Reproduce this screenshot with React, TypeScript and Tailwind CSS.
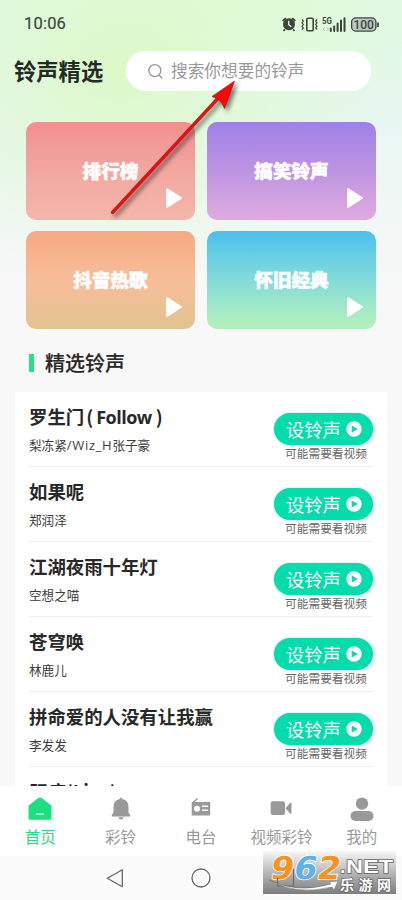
import type { ReactNode } from "react"
import clsx from "clsx"

interface Song {
    title: ReactNode;
    artist: ReactNode;
}

const categories = [
    { name: "排行榜", bg: "bg-linear-to-b from-[#f18f8f] via-[#f2a7a0] to-[#f4b7a9]" },
    { name: "搞笑铃声", bg: "bg-linear-to-b from-[#9f80e8] via-[#bd94e2] to-[#dfabdf]" },
    { name: "抖音热歌", bg: "bg-linear-to-b from-[#f6aa80] via-[#f8bd9a] to-[#e2c38f]" },
    { name: "怀旧经典", bg: "bg-linear-to-b from-[#4bbfec] via-[#82dcd8] to-[#b7f1b9]" },
]

const songs: Song[] = [
    {
        title: <>罗生门<span className="ml-[2px] font-semibold">(</span><span className="ml-[3px] font-['Open_Sans'] text-[18px] tracking-[-0.5px]">Follow</span><span className="ml-[4px] font-semibold">)</span></>,
        artist: <>梨冻紧<span className="font-['Open_Sans'] text-[13px] tracking-[0.7px]">/Wiz_H</span>张子豪</>,
    },
    { title: "如果呢", artist: "郑润泽" },
    { title: "江湖夜雨十年灯", artist: "空想之喵" },
    { title: "苍穹唤", artist: "林鹿儿" },
    { title: "拼命爱的人没有让我赢", artist: "李发发" },
]

function StatusBar(){
    return(
        <div className="h-[47px] flex items-center justify-between pl-[24px] pr-[22px] text-[#3c463f]">
            <span className="pt-[2px] font-['Roboto'] text-[16.5px] tracking-[0.2px] leading-none [-webkit-text-stroke:0.2px_#3c463f]">10:06</span>
            <svg width="100" height="20" viewBox="280 13 100 20" fill="none">
                {/* alarm */}
                <circle cx="289" cy="23.3" r="6" fill="currentColor" />
                <path d="M282.7 20l3.2-2.9M295.3 20l-3.2-2.9M285 28.3l-1.5 1.6M293 28.3l1.5 1.6" stroke="currentColor" strokeWidth="1.8" />
                <path d="M288.7 19.8v4l2.6 2" stroke="#e4f8e7" strokeWidth="1.3" />
                {/* vibrate */}
                <rect x="306.8" y="17.2" width="6.4" height="12.6" rx="1.4" stroke="currentColor" strokeWidth="1.6" />
                <path d="M302 18.5l1.3 1.6-1.3 1.7 1.3 1.7-1.3 1.7 1.3 1.7-1.3 1.6M317 18.5l-1.3 1.6 1.3 1.7-1.3 1.7 1.3 1.7-1.3 1.7 1.3 1.6" stroke="currentColor" strokeWidth="1.2" />
                {/* signal */}
                <text x="322" y="23.2" fontSize="8.3" fontWeight="700" fontFamily="Roboto, sans-serif" textLength="10" lengthAdjust="spacingAndGlyphs" fill="currentColor">5G</text>
                <path d="M325 26l-2 2 2 2M326.5 26l2 2-2 2" stroke="#bdc9c0" strokeWidth="1" />
                <path d="M330.8 27.5v2.5M334.2 25.5v4.5M337.6 22.5v7.5M341 19.5v10.5M344.5 17.3v12.7" stroke="currentColor" strokeWidth="2" strokeLinecap="round" />
                {/* battery */}
                <rect x="351.6" y="16.9" width="24.3" height="13.2" rx="4.2" fill="#bbc8c0" stroke="currentColor" strokeWidth="1.3" />
                <path d="M378 21.5v4.5" stroke="currentColor" strokeWidth="1.7" />
                <text x="363.7" y="27.8" textAnchor="middle" fontSize="12" fontWeight="500" fontFamily="Roboto, sans-serif" fill="currentColor">100</text>
            </svg>
        </div>
    )
}

function CategoryCard({ name, bg }: { name: string; bg: string }){
    return(
        <div className={clsx("relative h-[98px] rounded-[10px] flex items-center justify-center", bg)}>
            <span className="pb-[2px] text-[18.6px] leading-none font-black text-white [-webkit-text-stroke:0.5px_white]">{name}</span>
            <svg className="absolute right-[12px] bottom-[11px]" width="18" height="22" viewBox="0 0 18 22">
                <path d="M2 2.2L16 11 2 19.8z" fill="#fff" stroke="#fff" strokeWidth="2" strokeLinejoin="round" />
            </svg>
        </div>
    )
}

function SongRow({ title, artist }: Song){
    return(
        <li className="h-[75px] shrink-0 flex justify-between border-b border-[#eeeeee]">
            <div className="pt-[11px]">
                <p className="h-[27px] text-[18.4px] leading-[27px] font-bold text-[#282828] whitespace-nowrap">{title}</p>
                <p className="mt-[6px] h-[18px] text-[12.6px] leading-[18px] text-[#3c3c3c] whitespace-nowrap">{artist}</p>
            </div>
            <div className="w-[99px] pt-[21.5px] flex flex-col items-center">
                <button className="w-[99px] h-[31.5px] shrink-0 rounded-full bg-[#04dcac] shadow-[0_0_2px_#7df5dd] text-white flex items-center pl-[12px]">
                    <span className="pb-[1px] text-[18.3px] leading-none">设铃声</span>
                    <svg className="ml-[5px] mb-[1px]" width="16" height="16" viewBox="0 0 16 16">
                        <circle cx="8" cy="8" r="7.7" fill="#fff" />
                        <path d="M5.7 4.4L12 8l-6.3 3.6z" fill="#04dcac" />
                    </svg>
                </button>
                <span className="ml-[5px] text-[11.7px] leading-[15px] text-[#666] whitespace-nowrap">可能需要看视频</span>
            </div>
        </li>
    )
}

const tabs = [
    {
        name: "首页",
        icon: (
            <>
                <path d="M2 9.2L11.2 2q1.8-1.2 3.6 0L24 9.2q.5.5.5 1.3v11.8q0 1.5-1.5 1.5H3q-1.5 0-1.5-1.5V10.5q0-.8.5-1.3z" fill="currentColor" />
                <path d="M9.5 18h7" stroke="#c9ffe0" strokeWidth="1.4" strokeLinecap="round" />
            </>
        ),
    },
    {
        name: "彩铃",
        icon: (
            <>
                <path d="M11.8 3q0-1.5 1.2-1.5T14.2 3q6.3 1.2 6.3 8v5.5l1.8 2.7v1.3H3.7v-1.3l1.8-2.7V11q0-6.8 6.3-8z" fill="currentColor" />
                <path d="M10.3 21.3h5.4q-.6 2.2-2.7 2.2t-2.7-2.2z" fill="currentColor" />
            </>
        ),
    },
    {
        name: "电台",
        icon: (
            <>
                <path d="M5 6.5L9.5 2.5" stroke="currentColor" strokeWidth="1.5" />
                <path fillRule="evenodd" d="M3.7 6h18.5v13.5H3.7zM9 9.8a3 3 0 1 0 .01 6 3 3 0 0 0-.01-6zM14 9.6v1.5h6V9.6zM14 13.6v1.5h6v-1.5z" fill="currentColor" />
            </>
        ),
    },
    {
        name: "视频彩铃",
        icon: (
            <>
                <rect x="2.7" y="5.3" width="14.3" height="13.7" rx="2" fill="currentColor" />
                <path d="M17.5 12.2L22 7q1.5-1 1.5.6v9.2q0 1.6-1.5.6z" fill="currentColor" />
            </>
        ),
    },
    {
        name: "我的",
        icon: (
            <>
                <circle cx="13" cy="7.6" r="6.2" fill="currentColor" />
                <rect x="1.5" y="15" width="23" height="10" rx="5" fill="currentColor" />
            </>
        ),
    },
]

function TabBar(){
    return(
        <nav className="h-[70px] shrink-0 bg-white grid grid-cols-5">
            {tabs.map((tab, i) => (
                <div key={tab.name} className={clsx("pt-[10px] flex flex-col items-center", i === 0 ? "text-[#1ce081]" : "text-[#999999]")}>
                    <svg width="26" height="26" viewBox="0 0 26 26" fill="none">{tab.icon}</svg>
                    <span className="mt-[3px] text-[15.5px] leading-[22px] whitespace-nowrap">{tab.name}</span>
                </div>
            ))}
        </nav>
    )
}

function SystemNav(){
    return(
        <div className="h-[44px] shrink-0 bg-[#fbfbfb] grid grid-cols-5 items-center text-[#666]">
            <span></span>
            <svg className="ml-[25px]" width="20" height="22" viewBox="0 0 20 22" fill="none" stroke="currentColor" strokeWidth="1.3" strokeLinejoin="round">
                <path d="M17.3 2.7v17L2.3 11.2z" />
            </svg>
            <svg className="mx-auto" width="20" height="20" viewBox="0 0 20 20" fill="none" stroke="currentColor" strokeWidth="1.3">
                <circle cx="10" cy="10" r="9" />
            </svg>
        </div>
    )
}

function Watermark(){
    return(
        <svg className="absolute left-[263px] top-[851px]" width="133" height="43" viewBox="0 0 133 43">
            <defs>
                <linearGradient id="wm-bg" x1="0" y1="0" x2="0" y2="1">
                    <stop offset="0" stopColor="#f8f8f8" />
                    <stop offset="0.45" stopColor="#bdbdbd" />
                    <stop offset="1" stopColor="#7c7c7c" />
                </linearGradient>
            </defs>
            <rect width="133" height="43" fill="url(#wm-bg)" />
            <g fontFamily="DejaVu Sans, sans-serif" fontWeight="700" stroke="#fff" strokeWidth="1.6" paintOrder="stroke">
                <g transform="translate(6 27.5) skewX(-11) scale(1.06 1)" fontSize="31.5">
                    <text x="0" y="0" fill="#f7931e">9</text>
                    <text x="22" y="0" fill="#5bb3ea">6</text>
                    <text x="44" y="0" fill="#f7931e">2</text>
                </g>
            </g>
            <path d="M14.5 27v8h16V18" fill="none" stroke="#6d6d6d" strokeWidth="1.2" />
            <path d="M6 29q28 14 62 4l-2-2 9-1-4 9-2-3Q33 45 6 29z" fill="#fff" stroke="#666" strokeWidth="0.5" />
            <g fontWeight="700" fill="#fff" stroke="#666" strokeWidth="1.4" paintOrder="stroke">
                <text x="77" y="22" fontSize="19" fontFamily="Liberation Sans, sans-serif">.</text>
                <text x="83" y="22" fontSize="19" fontFamily="Liberation Sans, sans-serif" textLength="47" lengthAdjust="spacingAndGlyphs">NET</text>
                <text x="77" y="39" fontSize="14" fontFamily="Noto Sans CJK SC, sans-serif" textLength="51">乐游网</text>
            </g>
        </svg>
    )
}

function App(){
    return(
        <div className="relative w-[402px] h-[900px] overflow-hidden flex flex-col bg-[#f7f8f8] font-['Noto_Sans_CJK_SC',sans-serif]">
            <div className="h-[786px] overflow-hidden bg-[radial-gradient(ellipse_260px_210px_at_120px_70px,#ddf9c9_0%,#dff9d099_45%,transparent_100%),radial-gradient(ellipse_300px_150px_at_230px_0px,#dffbd6_0%,transparent_100%),linear-gradient(to_bottom,#e2f8ec_0px,#e7f6f2_110px,#f8f8f8_290px)]">
                <StatusBar />
                <header className="h-[48px] flex items-center pl-[14px]">
                    <h1 className="w-[112px] pb-[2px] text-[22.3px] leading-none font-bold text-[#242b26] whitespace-nowrap">铃声精选</h1>
                    <div className="w-[245px] h-[40px] rounded-full bg-white flex items-center pl-[21px] text-[#999]">
                        <svg width="17" height="17" viewBox="0 0 17 17" fill="none" stroke="currentColor" strokeWidth="1.4" strokeLinecap="round">
                            <circle cx="7.8" cy="7.6" r="6" />
                            <path d="M12.3 12.3l2.5 2.7" />
                        </svg>
                        <span className="ml-[7px] pb-[1px] text-[16.7px] leading-none">搜索你想要的铃声</span>
                    </div>
                </header>

                <div className="mt-[27px] mx-[26px] grid grid-cols-2 gap-x-[12px] gap-y-[11.4px]">
                    {categories.map((c) => <CategoryCard key={c.name} {...c} />)}
                </div>

                <div className="mt-[19.1px] h-[30px] pl-[29px] flex items-center">
                    <span className="w-[5px] h-[18px] bg-[#25e286]"></span>
                    <h2 className="ml-[11px] text-[20px] leading-none font-medium text-[#282828] [-webkit-text-stroke:0.2px_#282828]">精选铃声</h2>
                </div>

                <ul className="mt-[13.5px] mx-[15px] px-[14px] h-[420px] bg-white flex flex-col">
                    {songs.map((s, i) => <SongRow key={i} {...s} />)}
                    {/* next song, mostly scrolled under the tab bar */}
                    <li className="pt-[11px] text-[18.4px] leading-[27px] font-bold text-[#282828]">顽疾(Live)</li>
                </ul>
            </div>
            <TabBar />
            <SystemNav />
            <Watermark />

            {/* pointer to the search box */}
            <svg className="absolute left-[100px] top-[70px] drop-shadow-[3px_3px_2px_rgba(0,0,0,0.5)]" width="145" height="150" viewBox="100 70 145 150">
                <path d="M112.5 212.5L222 94" stroke="#d81515" strokeWidth="3.4" strokeLinecap="round" />
                <path d="M234.5 81L212 96.5l5.5 2.2 4.5 4.3 2.5 5.5z" fill="#f70808" stroke="#b51212" strokeWidth="0.7" />
            </svg>
        </div>
    )
}

export default App
